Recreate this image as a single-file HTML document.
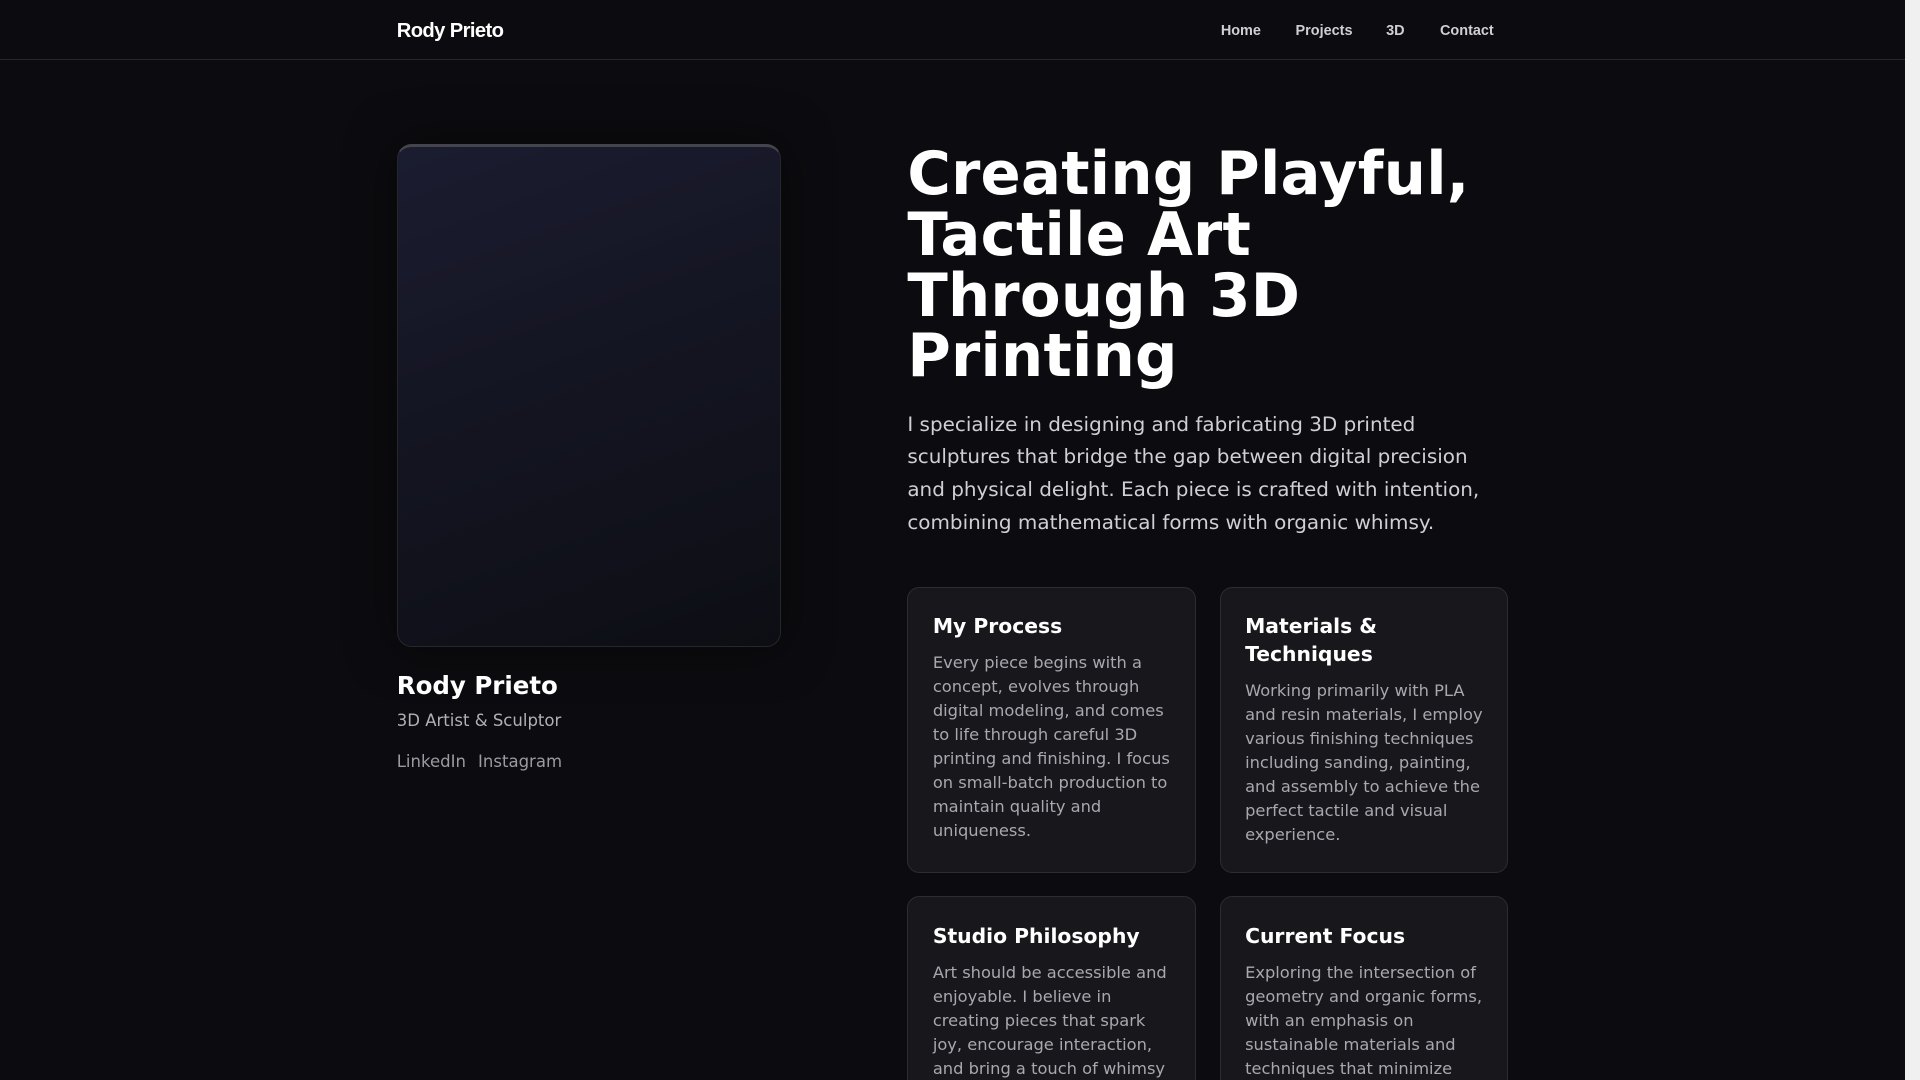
<!DOCTYPE html>
<html><head><meta charset="utf-8"><style>
html,body{margin:0;padding:0;background:#0c0c10;overflow:hidden;width:1920px;height:1080px}
#w{zoom:1.22449;width:1568px;height:882px;position:relative;overflow:hidden;font-family:"DejaVu Sans",sans-serif;color:#fff}
.nav{position:absolute;left:0;top:0;width:1556px;height:48px;border-bottom:1px solid #26262c}
.logo{position:absolute;left:324px;top:16px;font:bold 16.5px "Liberation Sans",sans-serif;letter-spacing:-0.5px}
.links{position:absolute;top:18.5px;font:bold 11.8px "Liberation Sans",sans-serif;color:#d0d0d4}
.links span{position:absolute;white-space:nowrap}
.img{position:absolute;left:324px;top:118px;width:312px;height:407px;border:1px solid #25262e;border-radius:12px;background:linear-gradient(160deg,#1b1c30 0%,#141522 45%,#0d0e14 100%);border-top:3px solid #44444c;box-shadow:0 0 40px rgba(0,0,0,.5)}
.name{position:absolute;left:324px;top:548px;font-weight:bold;font-size:20px}
.sub{position:absolute;left:324px;top:581px;font-size:13.5px;color:#b0b0b6}
.soc{position:absolute;left:324px;top:614px;font-size:13.5px;color:#9a9aa0;word-spacing:-1px}
h1{position:absolute;left:741px;top:118px;margin:0;font-size:48.4px;line-height:49.5px;font-weight:bold;width:500px;letter-spacing:0.2px}
.p{position:absolute;left:741px;top:333px;width:478px;font-size:16.3px;line-height:26.7px;color:#cfcfd4}
.card{position:absolute;width:194px;background:#17171c;border:1px solid #2c2c34;border-radius:10px;padding:20px;box-sizing:content-box}
.card h3{margin:0 0 9px;font-size:16.6px;line-height:23px}
.card p{margin:0;font-size:13.3px;line-height:19.6px;color:#a8a8ae}
.sb{position:absolute;left:1556px;top:0;width:12px;height:882px;background:#f0f0f0}
</style></head><body><div id="w">
<div class="nav"><div class="logo">Rody Prieto</div>
<div class="links"><span style="left:997px">Home</span><span style="left:1058px">Projects</span><span style="left:1132px">3D</span><span style="left:1176px">Contact</span></div></div>
<div class="img"></div>
<div class="name">Rody Prieto</div>
<div class="sub">3D Artist &amp; Sculptor</div>
<div class="soc">LinkedIn &nbsp;&nbsp;Instagram</div>
<h1>Creating Playful, Tactile Art Through 3D Printing</h1>
<div class="p">I specialize in designing and fabricating 3D printed sculptures that bridge the gap between digital precision and physical delight. Each piece is crafted with intention, combining mathematical forms with organic whimsy.</div>
<div class="card" style="left:741px;top:479px;height:192px"><h3>My Process</h3><p>Every piece begins with a concept, evolves through digital modeling, and comes to life through careful 3D printing and finishing. I focus on small-batch production to maintain quality and uniqueness.</p></div>
<div class="card" style="left:996px;top:479px;height:192px"><h3>Materials &amp; Techniques</h3><p>Working primarily with PLA and resin materials, I employ various finishing techniques including sanding, painting, and assembly to achieve the perfect tactile and visual experience.</p></div>
<div class="card" style="left:741px;top:732px;height:192px"><h3>Studio Philosophy</h3><p>Art should be accessible and enjoyable. I believe in creating pieces that spark joy, encourage interaction, and bring a touch of whimsy to everyday spaces.</p></div>
<div class="card" style="left:996px;top:732px;height:192px"><h3>Current Focus</h3><p>Exploring the intersection of geometry and organic forms, with an emphasis on sustainable materials and techniques that minimize waste.</p></div>
<div class="sb"></div>
</div></body></html>
